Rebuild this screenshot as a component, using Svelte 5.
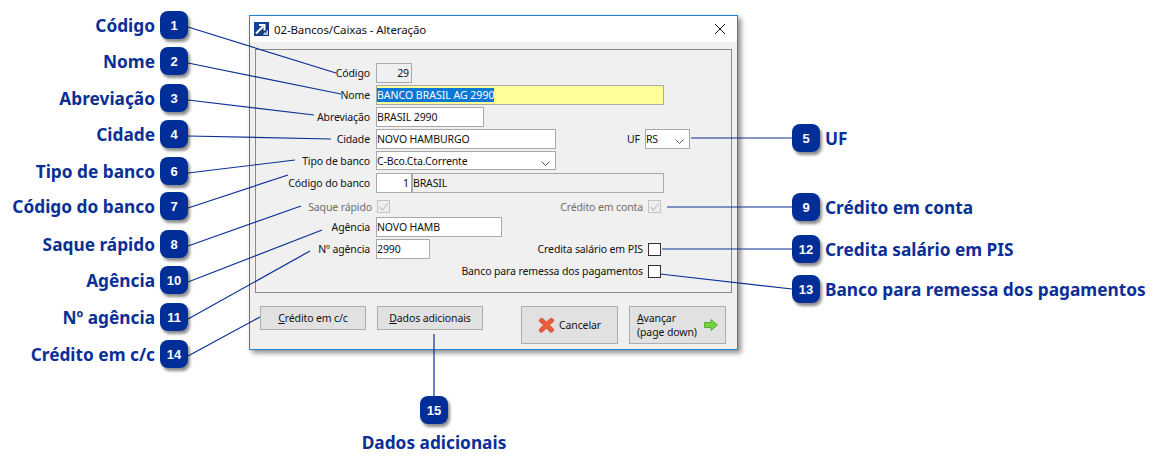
<script>
	const pins = [
		{ n: 1, label: "Código", x: 160, y: 11, to: [336, 73] },
		{ n: 2, label: "Nome", x: 160, y: 47, to: [341, 94] },
		{ n: 3, label: "Abreviação", x: 160, y: 84, to: [314, 115] },
		{ n: 4, label: "Cidade", x: 160, y: 120, to: [331, 139] },
		{ n: 6, label: "Tipo de banco", x: 160, y: 157, to: [295, 160] },
		{ n: 7, label: "Código do banco", x: 160, y: 192, to: [288, 175] },
		{ n: 8, label: "Saque rápido", x: 160, y: 230, to: [301, 206] },
		{ n: 10, label: "Agência", x: 160, y: 266, to: [322, 230] },
		{ n: 11, label: "Nº agência", x: 160, y: 303, to: [310, 251] },
		{ n: 14, label: "Crédito em c/c", x: 160, y: 340, to: [260, 317] }
	];
	const rightPins = [
		{ n: 5, label: "UF", x: 792, y: 124, to: [691, 138] },
		{ n: 9, label: "Crédito em conta", x: 792, y: 193, to: [667, 207] },
		{ n: 12, label: "Credita salário em PIS", x: 792, y: 235, to: [662, 249] },
		{ n: 13, label: "Banco para remessa dos pagamentos", x: 792, y: 275, to: [660, 274] }
	];
</script>

<div class="stage">
	<div class="dialog">
		<div class="titlebar">
			<svg class="appicon" width="15" height="14" viewBox="0 0 15 14">
				<defs>
					<linearGradient id="ico" x1="0" y1="0" x2="1" y2="1">
						<stop offset="0" stop-color="#0d4aa8" />
						<stop offset="1" stop-color="#16356f" />
					</linearGradient>
				</defs>
				<rect width="15" height="14" fill="url(#ico)" />
				<path d="M2 11.5 L9 4.5 M5 3 H10.5 V8.5" stroke="#fff" stroke-width="2" fill="none" />
				<path d="M9 13 l1.5 -3 l1.5 1 l1 -3 l1 0 v5z" fill="#a9c4e8" />
			</svg>
			<span>02-Bancos/Caixas - Alteração</span>
			<svg class="close" width="12" height="12" viewBox="0 0 12 12">
				<path d="M1 1 L11 11 M11 1 L1 11" stroke="#111" stroke-width="1" />
			</svg>
		</div>

		<div class="group">
			<div class="row">
				<label>Código</label>
				<div class="field ro num w36">29</div>
			</div>
			<div class="row">
				<label>Nome</label>
				<div class="field yellow w288"><span class="sel">BANCO BRASIL AG 2990</span></div>
			</div>
			<div class="row">
				<label>Abreviação</label>
				<div class="field w108">BRASIL 2990</div>
			</div>
			<div class="row">
				<label>Cidade</label>
				<div class="field w180">NOVO HAMBURGO</div>
				<label class="uf">UF</label>
				<div class="field select w45">
					RS
					<svg width="9" height="5" viewBox="0 0 9 5"><path d="M0.5 0.5 L4.5 4.5 L8.5 0.5" stroke="#555" fill="none" /></svg>
				</div>
			</div>
			<div class="row tipo">
				<label>Tipo de banco</label>
				<div class="field select w180">
					C-Bco.Cta.Corrente
					<svg width="9" height="5" viewBox="0 0 9 5"><path d="M0.5 0.5 L4.5 4.5 L8.5 0.5" stroke="#555" fill="none" /></svg>
				</div>
			</div>
			<div class="row banco">
				<label>Código do banco</label>
				<div class="field num w36">1</div>
				<div class="field ro w252">BRASIL</div>
			</div>
			<div class="row checks">
				<label class="off">Saque rápido</label>
				<span class="check off first">
					<svg width="11" height="11" viewBox="0 0 11 11"><path d="M1.5 6 L4.5 9 L10 2" stroke="#c4c4c4" stroke-width="1.2" fill="none" /></svg>
				</span>
				<label class="off right">Crédito em conta</label>
				<span class="check off">
					<svg width="11" height="11" viewBox="0 0 11 11"><path d="M1.5 6 L4.5 9 L10 2" stroke="#c4c4c4" stroke-width="1.2" fill="none" /></svg>
				</span>
			</div>
			<div class="row agencia">
				<label>Agência</label>
				<div class="field w126">NOVO HAMB</div>
			</div>
			<div class="row nagencia">
				<label>Nº agência</label>
				<div class="field w54">2990</div>
				<label class="right">Credita salário em PIS</label>
				<span class="check"></span>
			</div>
			<div class="row remessa">
				<label class="right">Banco para remessa dos pagamentos</label>
				<span class="check"></span>
			</div>
		</div>

		<div class="buttons">
			<button class="small"><u>C</u>rédito em c/c</button>
			<button class="small"><u>D</u>ados adicionais</button>
			<button class="big cancel">
				<svg width="17" height="16" viewBox="0 0 17 16">
					<path d="M1 3.5 Q1 2.5 3.5 1 Q4.5 1 8.5 5 Q12.5 1 13.5 1 Q16 2.5 16 3.5 Q15.5 5 11.5 8 Q15.5 11.5 16 13 Q15 15 13 15.5 Q11.5 15 8.5 11 Q5 15 3.5 15.5 Q1.5 15 1 13 Q2 11 5.5 8 Q1.5 5 1 3.5 Z" fill="#ea5a3c" stroke="#cf3f2a" stroke-width="0.6" />
				</svg>
				Cancelar
			</button>
			<button class="big next">
				<span class="two"><u>A</u>vançar<br />(page down)</span>
				<svg width="14" height="12" viewBox="0 0 14 12">
					<path d="M0.5 3.5 H7 V0.5 L13.5 6 L7 11.5 V8.5 H0.5 Z" fill="#6fd63a" stroke="#4b9a2a" stroke-width="0.8" />
				</svg>
			</button>
		</div>
	</div>

	<svg class="lines" width="1160" height="471">
		{#each pins as p}
			<line x1={p.x + 28} y1={p.y + 16} x2={p.to[0]} y2={p.to[1]} />
		{/each}
		{#each rightPins as p}
			<line x1={p.x} y1={p.y + 14} x2={p.to[0]} y2={p.to[1]} />
		{/each}
		<line x1="434" y1="396" x2="434" y2="334" />
	</svg>

	{#each pins as p}
		<div class="callout left" style="top:{p.y}px">
			<span class="text">{p.label}</span>
			<span class="pin">{p.n}</span>
		</div>
	{/each}
	{#each rightPins as p}
		<div class="callout rightside" style="top:{p.y}px">
			<span class="pin">{p.n}</span>
			<span class="text">{p.label}</span>
		</div>
	{/each}
	<div class="callout bottom">
		<span class="pin">15</span>
		<span class="text">Dados adicionais</span>
	</div>
</div>

<style>
	:global(body) {
		margin: 0;
		background: #fff;
	}
	.stage {
		position: relative;
		width: 1160px;
		height: 471px;
		overflow: hidden;
		font-family: "Noto Sans", sans-serif;
	}
	.lines {
		position: absolute;
		left: 0;
		top: 0;
		pointer-events: none;
	}
	.lines line {
		stroke: #0c3096;
		stroke-width: 1.2;
	}

	/* dialog */
	.dialog {
		position: absolute;
		left: 249px;
		top: 15px;
		width: 489px;
		height: 335px;
		box-sizing: border-box;
		border: 1px solid #1f83d6;
		background: #f0f0f0;
		box-shadow: 3px 3px 5px rgba(0, 0, 0, 0.45);
		font-size: 10.5px;
		letter-spacing: -0.12px;
		color: #111;
		padding: 0 5px;
	}
	.titlebar {
		display: flex;
		align-items: center;
		height: 26px;
		margin: 0 -5px;
		padding: 0 11px 0 4px;
		background: #fff;
		font-size: 11.5px;
	}
	.appicon {
		margin-right: 5px;
	}
	.close {
		margin-left: auto;
	}
	.group {
		height: 244px;
		margin-top: 7px;
		box-sizing: border-box;
		border: 1px solid #8a8a8a;
		padding-top: 13px;
	}
	.row {
		display: flex;
		align-items: center;
		height: 20px;
		margin-bottom: 2px;
	}
	.row.tipo {
		height: 19px;
		margin-bottom: 3px;
	}
	.row.banco {
		margin-bottom: 7px;
	}
	.row.checks {
		height: 13px;
		margin-bottom: 4px;
	}
	label {
		width: 120px;
		flex: none;
		text-align: right;
		padding-right: 6px;
		box-sizing: border-box;
		white-space: nowrap;
	}
	label.off {
		color: #6d6d6d;
		padding-right: 4px;
	}
	label.uf {
		width: auto;
		margin-left: 71px;
		padding-right: 5px;
	}
	label.right {
		width: auto;
		margin-left: auto;
		padding-right: 5px;
	}
	.field {
		box-sizing: border-box;
		height: 100%;
		border: 1px solid #a9a9a9;
		background: #fff;
		padding: 0;
		display: flex;
		align-items: center;
		white-space: nowrap;
		flex: none;
	}
	.field.ro {
		background: #f0f0f0;
	}
	.field.num {
		justify-content: flex-end;
		padding-right: 2px;
	}
	.field.yellow {
		background: #ffff99;
	}
	.field.select {
		justify-content: space-between;
		padding-right: 5px;
	}
	.field.select svg {
		margin-top: 5px;
	}
	.sel {
		background: #0a78d7;
		color: #fff;
		letter-spacing: 0;
	}
	.w36 { width: 36px; }
	.w45 { width: 45px; }
	.w54 { width: 54px; }
	.w108 { width: 108px; }
	.w126 { width: 126px; }
	.w180 { width: 180px; }
	.w252 { width: 252px; }
	.w288 { width: 288px; }
	.check {
		box-sizing: border-box;
		width: 13px;
		height: 13px;
		border: 1px solid #333;
		background: #fff;
		flex: none;
		margin-right: 70px;
		display: block;
	}
	.check.off {
		border-color: #c4c4c4;
		background: #eee;
	}
	.check.first {
		margin-left: 1px;
		margin-right: 0;
	}
	.check svg {
		display: block;
	}

	.buttons {
		display: flex;
		align-items: flex-start;
		margin-top: 13px;
		padding-left: 5px;
	}
	button {
		box-sizing: border-box;
		font: inherit;
		letter-spacing: inherit;
		color: #111;
		background: #e1e1e1;
		border: 1px solid #adadad;
		padding: 0;
		display: flex;
		align-items: center;
		justify-content: center;
	}
	button.small {
		width: 106px;
		height: 24px;
		margin-right: 11px;
	}
	button.big {
		width: 97px;
		height: 38px;
	}
	button.cancel {
		margin-left: 27px;
		margin-right: 11px;
		gap: 4px;
	}
	button.next {
		justify-content: flex-start;
		padding-left: 7px;
		gap: 7px;
		text-align: left;
	}

	/* callouts */
	.callout {
		position: absolute;
		display: flex;
		align-items: center;
		color: #0a2f96;
		font-weight: 700;
		font-size: 17.3px;
		white-space: nowrap;
	}
	.callout.left {
		right: 972px;
		gap: 5px;
	}
	.callout.rightside {
		left: 792px;
		gap: 5px;
	}
	.callout.bottom {
		left: 334px;
		width: 200px;
		top: 396px;
		flex-direction: column;
		gap: 7px;
	}
	.pin {
		width: 28px;
		height: 28px;
		flex: none;
		border-radius: 8px;
		background: #002e98;
		color: #fff;
		font-size: 13px;
		display: flex;
		align-items: center;
		justify-content: center;
		box-shadow: 2px 3px 3px rgba(0, 0, 0, 0.45);
		font-family: "Liberation Sans", sans-serif;
	}
</style>
